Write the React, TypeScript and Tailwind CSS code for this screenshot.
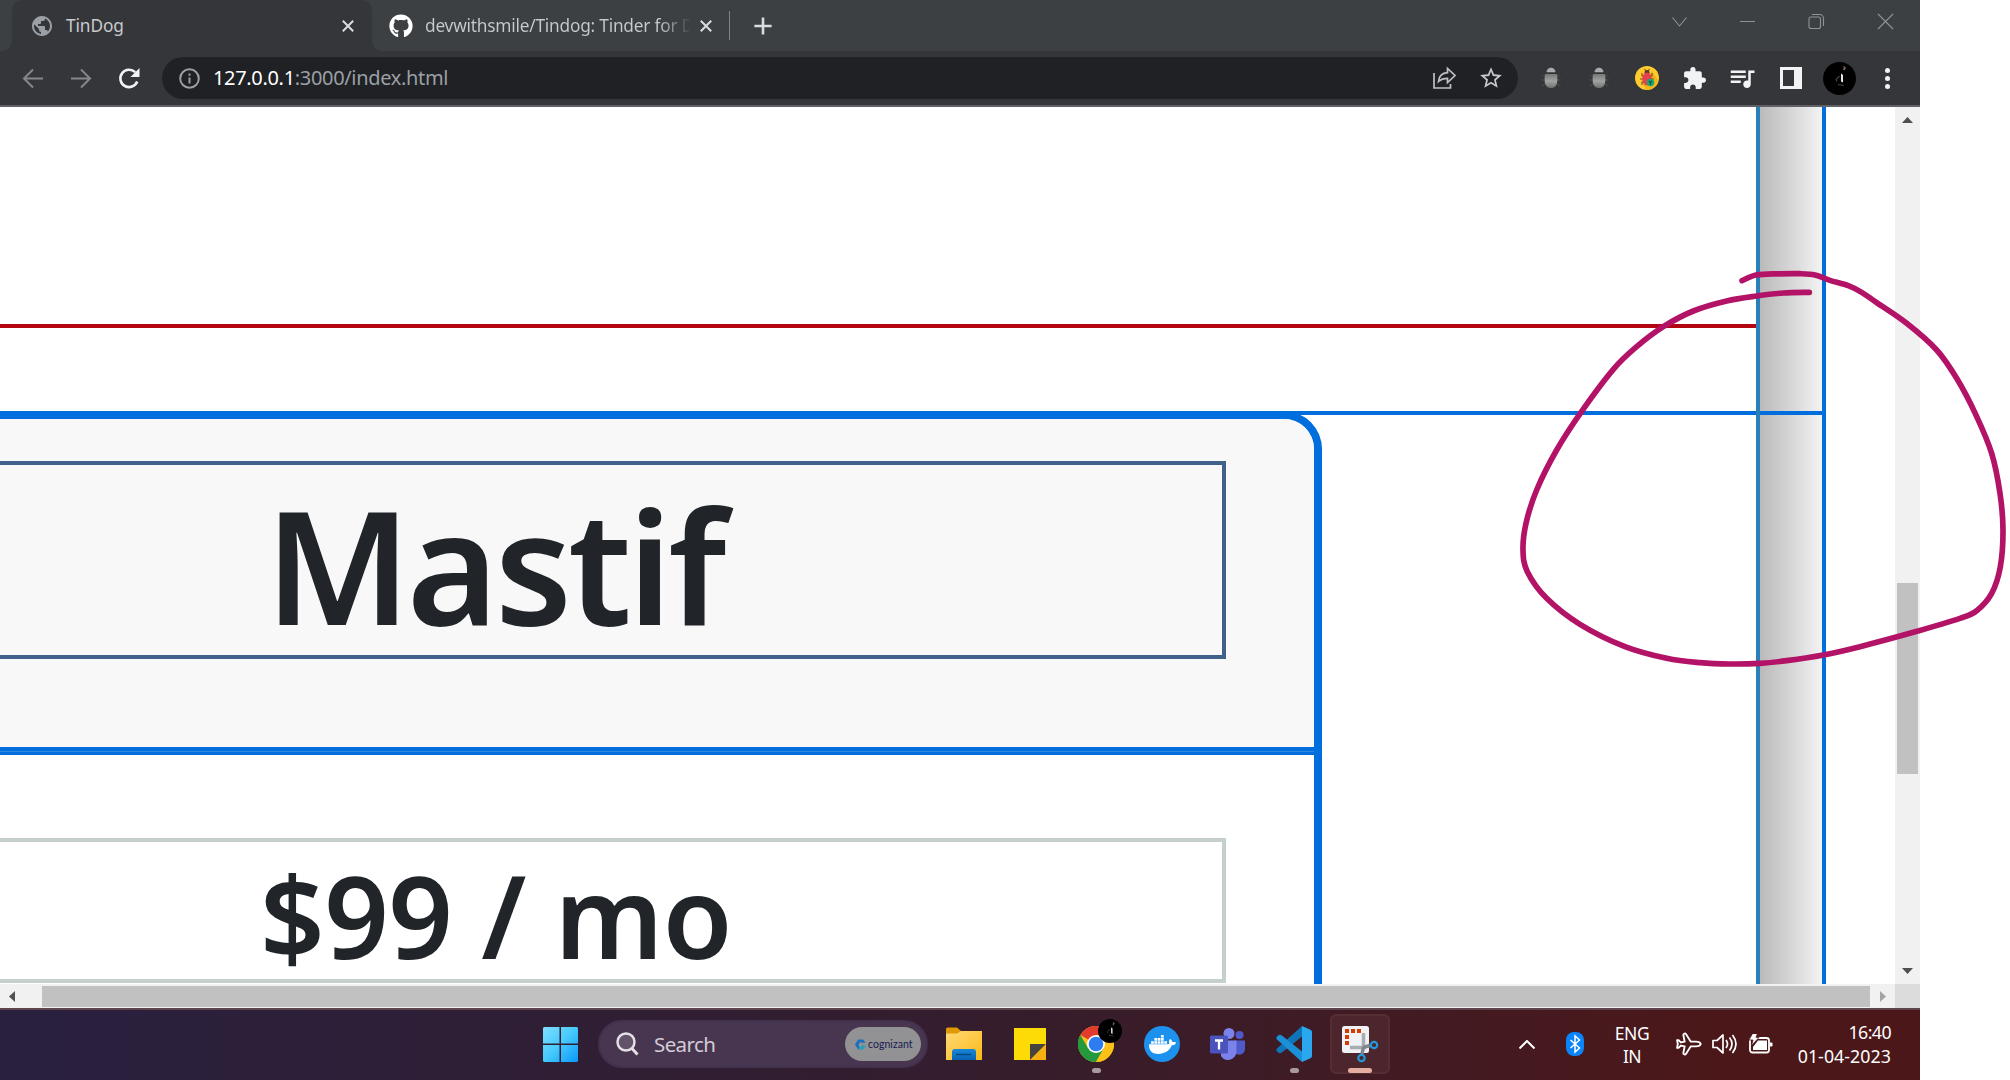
import React from 'react';
import { Plane } from 'lucide-react';
import { FaDocker } from 'react-icons/fa';
import { FaGithub } from 'react-icons/fa6';
import { MdExtension, MdPublic, MdQueueMusic, MdStarBorder } from 'react-icons/md';

const STROKE_POINTS: [number, number][] = [
  [726, 92], [768, 75], [835, 71.5], [900, 71], [945, 75], [990, 91], [1045, 107], [1085, 127], [1130, 158], [1220, 220],
  [1310, 300], [1370, 385], [1427, 493], [1475, 610], [1500, 730], [1509, 840], [1501, 950], [1475, 1030],
  [1430, 1082], [1380, 1105], [1240, 1147], [1080, 1190], [970, 1215], [860, 1232], [780, 1240], [690, 1242],
  [600, 1238], [500, 1225], [375, 1190], [240, 1123], [140, 1045], [82, 965], [69, 900], [78, 820],
  [110, 720], [170, 600], [245, 484], [340, 358], [410, 290], [490, 230], [580, 183], [680, 153], [770, 138],
  [850, 129], [928, 127],
];

/** Smooth cubic path running through every point. */
function smoothPath(pts: [number, number][]): string {
  let d = `M${pts[0][0]} ${pts[0][1]}`;
  for (let i = 0; i < pts.length - 1; i++) {
    const a = pts[Math.max(i - 1, 0)];
    const b = pts[i];
    const c = pts[i + 1];
    const e = pts[Math.min(i + 2, pts.length - 1)];
    d += `C${b[0] + (c[0] - a[0]) / 6} ${b[1] + (c[1] - a[1]) / 6} ${c[0] - (e[0] - b[0]) / 6} ${c[1] - (e[1] - b[1]) / 6} ${c[0]} ${c[1]}`;
  }
  return d;
}

function PenStroke() {
  return (
    <svg className="pointer-events-none absolute left-[1500px] top-[250px] z-20" width="510" height="430" viewBox="0 0 1530 1290" fill="none">
      <path d={smoothPath(STROKE_POINTS)} stroke="#b31366" strokeWidth="17" strokeLinecap="round" strokeLinejoin="round" />
    </svg>
  );
}

function Cross({ className }: { className: string }) {
  return (
    <svg className={className} width="12" height="12" viewBox="0 0 12 12" stroke="currentColor" strokeWidth="2" fill="none">
      <path d="M.8.8l10.4 10.4M11.2.8L.8 11.2" />
    </svg>
  );
}

function TabStrip() {
  return (
    <div className="flex h-[51px] bg-[#3c4043] text-[17.3px] leading-[51px]">
      <div className="w-3 bg-[#35363a]">
        <div className="h-full rounded-br-[10px] bg-[#3c4043]" />
      </div>
      <div className="flex w-[360px] items-center rounded-t-[10px] bg-[#35363a] pl-[18px] pr-[18px] text-[#dadce0]">
        <MdPublic className="size-6 text-[#9aa0a6]" />
        <span className="ml-3 flex-1 tracking-[-0.1px] text-[#c8cacd]">TinDog</span>
        <Cross className="text-[#dadce0]" />
      </div>
      <div className="w-[358px] bg-[#35363a]">
        <div className="flex h-full items-center rounded-bl-[10px] bg-[#3c4043] pl-[17px]">
          <FaGithub className="size-6 text-white" />
          <span className="ml-3 w-[266px] overflow-hidden whitespace-nowrap bg-gradient-to-r from-[#c8cacd] from-88% to-transparent bg-clip-text tracking-[-0.22px] text-transparent">
            devwithsmile/Tindog: Tinder for Dogs
          </span>
          <Cross className="ml-[9px] text-[#dadce0]" />
          <div className="ml-auto h-[29px] w-px bg-[#7f8386]" />
        </div>
      </div>
      <svg className="ml-6 mt-[17px]" width="18" height="18" viewBox="0 0 18 18" stroke="#dadce0" strokeWidth="2.6">
        <path d="M9 .4v17.2M.4 9h17.2" />
      </svg>
      <div className="ml-auto flex pt-[13px]">
        <svg width="248" height="18" fill="none" stroke="#909396" strokeWidth="1.1">
          <path d="M.5 4.5l7 8.5 7-8.5M68 8.5h15M206 1l15 15M221 1l-15 15" />
          <rect x="137" y="4" width="11.5" height="11.5" rx="2" />
          <path d="M140 1.5h7.5a4 4 0 014 4V13" />
        </svg>
      </div>
    </div>
  );
}

function Bug() {
  return (
    <svg width="24" height="24" viewBox="0 0 24 24" fill="none">
      <path d="M3 9l4 2M2 14h5M3 20l4-3M21 9l-4 2M22 14h-5M21 20l-4-3" stroke="#47484c" strokeWidth="1.3" />
      <path d="M7.5 6.5C7.500 0 16.500 0 16.500 6.500z" fill="#aaa" />
      <path d="M6 8h12q2 14-6 14T6 8z" fill="url(#bugBody)" />
      <path d="M6 7.200h12" stroke="#333" strokeWidth="1.400" />
      <defs>
        <linearGradient id="bugBody" x1="0" y1="0" x2="0" y2="1">
          <stop stopColor="#777" />
          <stop offset=".5" stopColor="#a2a2a2" />
          <stop offset="1" stopColor="#707070" />
        </linearGradient>
      </defs>
    </svg>
  );
}

function ColorBug() {
  return (
    <svg width="24" height="24" viewBox="0 0 24 24">
      <circle cx="12" cy="12" r="12" fill="#fdcb2e" />
      <path d="M17 5l6 9a12 12 0 01-11 10l-4-5z" fill="#f3b518" />
      <path d="M7 7v3h3M17 7v3h-3M5 13h14M7 19v-3h3M9.500 3l1.500 2M14.500 3L13 5" stroke="#7a4a30" strokeWidth="1.1" fill="none" />
      <circle cx="12" cy="6.500" r="2.500" fill="#5b3a2e" />
      <ellipse cx="12" cy="13" rx="4.800" ry="6.500" fill="#e2434d" />
      <circle cx="15.500" cy="16.500" r="3.700" fill="#19a974" />
      <path d="M14 15l1.500 1.500L17 15M15.500 16.500v2.500" stroke="#14544a" strokeWidth="1.2" fill="none" />
    </svg>
  );
}

function Avatar({ className }: { className: string }) {
  return (
    <svg className={className} viewBox="0 0 33 33">
      <circle cx="16.500" cy="16.500" r="16.500" fill="#000" />
      <path d="M18 11.500l2 1.500v7.500l-2-1z" fill="#e5e5ee" />
      <path d="M20 4l3 1.500-1.500 3-1.500-1 1-1.500z" fill="#8d6f66" />
      <path d="M16.500 14l-3.500 3.500 1 2M15 22.500l6 1" stroke="#47434a" strokeWidth="1.1" fill="none" />
    </svg>
  );
}

function Toolbar() {
  return (
    <div className="flex h-14 items-start border-b-2 border-[#5f6165] bg-[#35363a] pt-1.5">
      <svg className="ml-[21px] mt-[9px]" width="120" height="24" fill="none">
        <g stroke="#85878a" strokeWidth="2">
          <path d="M22 12.500H3.500M12 3.500l-9 9 9 9" />
          <path d="M50 12.500h18.500M60 3.500l9 9-9 9" />
        </g>
        <path d="M116.200 15.500a8.700 8.700 0 11-2-9.300" stroke="#f1f3f4" strokeWidth="2.600" />
        <path d="M118.500 2v9h-9z" fill="#f1f3f4" />
      </svg>
      <div className="ml-[21px] flex h-[42px] w-[1356px] items-center rounded-full bg-[#202124] pl-[17px] pr-[12px]">
        <svg width="21" height="21" viewBox="0 0 21 21" fill="none" stroke="#9aa0a6" strokeWidth="2">
          <circle cx="10.500" cy="10.500" r="9.300" />
          <path d="M10.500 9.500v6M10.500 5.500v2.200" />
        </svg>
        <span className="ml-[13px] flex-1 text-[20px] tracking-[-0.33px] text-[#9aa0a6]">
          <span className="text-white">127.0.0.1</span>:3000/index.html
        </span>
        <svg className="mr-[19px]" width="25" height="24" viewBox="0 0 25 24" fill="none" stroke="#bdc1c6" strokeWidth="1.7">
          <path d="M2 7v15h16.500v-4" />
          <path d="M6.500 15.500c.5-5.500 4-8.500 9-8.800V2.500l7.500 7-7.500 7v-4.200c-4 0-6.500.8-9 3.200z" />
        </svg>
        <MdStarBorder className="mx-0.5 size-[26px] text-[#c6c9cc]" />
      </div>
      <div className="flex h-[42px] flex-1 items-center pl-[21px] text-[#f1f3f4]">
        <Bug />
        <div className="w-6" />
        <Bug />
        <div className="w-6" />
        <ColorBug />
        <MdExtension className="ml-[23px] size-[25px]" />
        <MdQueueMusic className="ml-[20px] size-[30px]" />
        <div className="ml-[23px] flex h-[22px] w-[22px] border-2 border-[#f1f3f4] bg-[#f1f3f4] p-px pr-[6px]">
          <div className="flex-1 bg-[#35363a]" />
        </div>
        <Avatar className="ml-[21px] size-[33px]" />
        <div className="ml-[29px] flex flex-col gap-[3px]">
          <i className="size-[5px] rounded-full bg-[#f1f3f4]" />
          <i className="size-[5px] rounded-full bg-[#f1f3f4]" />
          <i className="size-[5px] rounded-full bg-[#f1f3f4]" />
        </div>
      </div>
    </div>
  );
}

function PricingCard() {
  return (
    <div className="-mt-1 h-[600px] w-[1322px] overflow-hidden rounded-tr-[38px] border-r-8 border-t-8 border-[#006edc] text-[#212529]">
      <div className="h-[332px] border-b-4 border-[#006edc] bg-[#f8f8f8] pt-[42px]">
        <div className="h-[198px] w-[1226px] border-y-4 border-r-4 border-[#40618a]">
          <h3 className="ml-[265px] text-[157px] font-semibold leading-[198px] tracking-[-4px]">Mastif</h3>
        </div>
      </div>
      <div className="h-1 border-t border-[#3389e2] bg-[#006edc]" />
      <div className="mt-[83px] h-[145px] w-[1226px] border-y-4 border-r-4 border-[#c5d0cb]">
        <h2 className="ml-[260px] whitespace-nowrap text-[113px] font-[560] leading-[147px] tracking-[-0.5px]">$99 / mo</h2>
      </div>
    </div>
  );
}

function Page() {
  return (
    <div className="relative h-[877px] w-[1895px] overflow-hidden bg-white">
      <div className="absolute inset-y-0 left-[1760px] w-[62px] bg-gradient-to-r from-[#bababa] to-[#f3f3f3]" />
      <div className="relative h-[221px] w-[1756px] border-b-4 border-[#b30610]" />
      <div className="relative mt-[83px] w-[1822px] border-t-4 border-[#006edc]">
        <PricingCard />
      </div>
      <div className="absolute inset-y-0 left-[1756px] w-[70px] border-l-4 border-r-4 border-l-[#2980b9] border-r-[#006edc]" />
    </div>
  );
}

function VerticalScrollbar() {
  return (
    <div className="flex w-[25px] flex-col items-center bg-[#f1f1f1]">
      <svg className="mt-[10px]" width="11" height="6"><path d="M0 6L5.500 0 11 6z" fill="#505050" /></svg>
      <div className="mt-[460px] h-[191px] w-[21px] bg-[#c1c1c1]" />
      <svg className="mb-[10px] mt-auto" width="11" height="6"><path d="M0 0h11L5.500 6z" fill="#505050" /></svg>
    </div>
  );
}

function HorizontalScrollbar() {
  return (
    <div className="flex h-6 items-center bg-[#f1f1f1]">
      <svg className="ml-[9px]" width="6" height="11"><path d="M6 0v11L0 5.500z" fill="#505050" /></svg>
      <div className="ml-[27px] h-[21px] w-[1828px] bg-[#c1c1c1]" />
      <svg className="ml-[10px]" width="6" height="11"><path d="M0 0v11l6-5.500z" fill="#a3a3a3" /></svg>
      <div className="ml-auto h-full w-[25px] bg-[#dcdcdc]" />
    </div>
  );
}

function WindowsLogo() {
  return (
    <svg width="35" height="35" viewBox="0 0 35 35">
      <defs>
        <linearGradient id="win" x1="0" y1="0" x2="1" y2="1">
          <stop stopColor="#7fe0ff" />
          <stop offset=".5" stopColor="#45c9fc" />
          <stop offset="1" stopColor="#0a98fb" />
        </linearGradient>
      </defs>
      <path d="M1 0h15.500v16.500H0V1zM18 0h16l1 1v15.500H18zM0 18h16.500v17H1l-1-1zM18 18h17v16l-1 1H18z" fill="url(#win)" />
    </svg>
  );
}

function SearchBox() {
  return (
    <div className="ml-5 flex h-12 w-[330px] items-center rounded-full border-2 border-[#41314c] bg-[#483650] pl-[16px] pr-[5px]">
      <svg width="23" height="24" viewBox="0 0 23 24" fill="none" stroke="#e4e0e6" strokeWidth="2.500">
        <circle cx="10" cy="10" r="8.500" fill="#62536a" />
        <path d="M15.500 16l6 6.500" strokeWidth="3" />
      </svg>
      <span className="ml-[15px] flex-1 pt-px text-[20.500px] tracking-[-0.6px] text-[#d2ccd5]">Search</span>
      <div className="flex h-[34px] w-[76px] items-center rounded-full bg-[#929294] pl-[10px]">
        <svg width="11" height="11" viewBox="0 0 11 11">
          <path d="M3 .5h5l2.500 3-3 .5-2-1-2 2.500L5 9.500 3 10.500 0 5.500z" fill="#1c6fc0" />
          <path d="M3 10.500h5l3-3.500-3-1-3 2z" fill="#25a2b5" />
        </svg>
        <span className="ml-[2px] font-[Lato] text-[10.500px] leading-none tracking-[0.05px] text-[#191a55]">cognizant</span>
      </div>
    </div>
  );
}

function FolderIcon() {
  return (
    <svg width="36" height="34" viewBox="0 0 36 34">
      <defs>
        <linearGradient id="folder" x1="0" y1="0" x2="1" y2="1">
          <stop stopColor="#ffd976" />
          <stop offset="1" stopColor="#fbb917" />
        </linearGradient>
        <linearGradient id="folderBlue" x1="0" y1="0" x2="0" y2="1">
          <stop stopColor="#1a86d8" />
          <stop offset="1" stopColor="#0864b4" />
        </linearGradient>
      </defs>
      <path d="M0 1.500L1.500.5H11l4 3.500v6H0z" fill="#dd9a05" />
      <path d="M0 6.500h11L15 4h21v29H0z" fill="url(#folder)" />
      <path d="M6 33v-8a3 3 0 013-3h18a3 3 0 013 3v8z" fill="url(#folderBlue)" />
      <path d="M10 27.500h15" stroke="#064a86" strokeWidth="1.500" />
    </svg>
  );
}

function StickyIcon() {
  return (
    <svg width="32" height="32" viewBox="0 0 32 32">
      <path d="M0 0h32v16L16 32H0z" fill="#fddb06" />
      <path d="M16 16h16L16 32z" fill="#46443c" />
      <path d="M32 16v16H16z" fill="#f5b012" />
    </svg>
  );
}

function ChromeIcon() {
  return (
    <svg width="36" height="36" viewBox="0 0 36 36">
      <circle cx="18" cy="18" r="18" fill="#fbc116" />
      <path d="M18 18L2.400 9A18 18 0 0133.600 9H18z" fill="#e33b2e" />
      <path d="M2.400 9A18 18 0 0018 36l7.800-13.500L10.200 22.500z" fill="#25993e" />
      <path d="M33.600 9H18v9l7.800 4.500L18 36A18 18 0 0033.600 9z" fill="#fbc116" />
      <circle cx="18" cy="18" r="9" fill="#fff" />
      <circle cx="18" cy="18" r="7.300" fill="#2d7cf0" />
    </svg>
  );
}

function TeamsIcon() {
  return (
    <svg width="36" height="33" viewBox="0 0 36 33">
      <circle cx="29.500" cy="7" r="4" fill="#5059c9" />
      <circle cx="19" cy="5.500" r="5.500" fill="#7b83eb" />
      <path d="M24 12.500h11V21a6 6 0 01-11 3z" fill="#5059c9" />
      <path d="M11 12.500h15.500V23a8.500 9 0 01-15.500 5z" fill="#7b83eb" />
      <rect y="7.500" width="18" height="18" rx="1.500" fill="#4b53bc" />
      <path d="M5 12.500h8M9 12.500v9" stroke="#fff" strokeWidth="2.300" />
    </svg>
  );
}

function VsCodeIcon() {
  return (
    <svg width="36" height="36" viewBox="0 0 36 36">
      <path d="M26 0L1 22.500q-1.300 1.500 0 3l2 1.500q1.200.6 2.500-.2L26 10.500z" fill="#0f74b8" />
      <path d="M26 36L1 13.500q-1.300-1.500 0-3L3 9q1.200-.6 2.500.2L26 25.500z" fill="#1a90d6" />
      <path d="M26 0l8.500 3.800Q36 4.600 36 6v24q0 1.400-1.500 2.200L26 36z" fill="#2ba7f0" />
    </svg>
  );
}

function SnipIcon() {
  return (
    <svg width="37" height="37" viewBox="0 0 37 37" fill="none">
      <rect width="27" height="27" rx="2.500" fill="#f0f2f5" />
      <path d="M3 5h4M9 5h4M15 5h4M3 11h4M3 17h4" stroke="#d83b01" strokeWidth="4" />
      <path d="M21.500 7v16M8 21.500h16" stroke="#a9adb2" strokeWidth="3.500" />
      <path d="M21.500 21l-1.500 7M21 21.500l7-2" stroke="#7f868c" strokeWidth="3.500" />
      <circle cx="32" cy="19" r="3.200" stroke="#2298da" strokeWidth="2.200" />
      <circle cx="19.500" cy="32" r="3.200" stroke="#2298da" strokeWidth="2.200" />
    </svg>
  );
}

function Taskbar() {
  return (
    <div className="h-[72px] border-t-2 border-[#5d444d] bg-gradient-to-r from-[#29203f] from-0% via-[#331d2e] via-48% to-[#4b1719] to-90%">
      <div className="flex h-[68px] items-center pl-[543px] text-white">
        <WindowsLogo />
        <SearchBox />
        <div className="ml-[18px]"><FolderIcon /></div>
        <div className="ml-8"><StickyIcon /></div>
        <div className="relative ml-8">
          <ChromeIcon />
          <Avatar className="absolute -top-[7px] left-5 size-6" />
          <i className="absolute left-[14px] top-[42px] h-[5px] w-[9px] rounded-full bg-[#aa9aa0]" />
        </div>
        <div className="ml-[30px] flex size-9 items-center justify-center rounded-full bg-[#1d91ee]">
          <FaDocker className="size-[27px]" />
        </div>
        <div className="ml-[30px]"><TeamsIcon /></div>
        <div className="relative ml-[30px]">
          <VsCodeIcon />
          <i className="absolute left-[14px] top-[42px] h-[5px] w-[9px] rounded-full bg-[#aa9aa0]" />
        </div>
        <div className="relative ml-[18px] size-[60px] rounded-md border-2 border-[#572d35] bg-[#4d252d] pl-[10px] pt-[10px]">
          <SnipIcon />
          <i className="absolute left-4 top-[52px] h-[5px] w-6 rounded-full bg-[#e5aea3]" />
        </div>
        <svg className="ml-[129px]" width="16" height="9" fill="none" stroke="#fff" strokeWidth="2"><path d="M.5 8.500L8 1l7.500 7.500" /></svg>
        <div className="ml-[31px] flex h-6 w-[18px] justify-center rounded-[8px] bg-[#0a84f8]">
          <svg width="12" height="24" viewBox="0 0 12 24" fill="none" stroke="#fff" strokeWidth="1.500"><path d="M1.500 8l9 8L6 20V4l4.500 4-9 8" /></svg>
        </div>
        <div className="ml-[29px] w-[38px] pt-px text-center text-[17.500px] leading-[23px] tracking-[-0.5px]">
          <div>ENG</div>
          <div>IN</div>
        </div>
        <Plane className="ml-[23px] size-[26px] rotate-45" strokeWidth={1.700} />
        <svg className="ml-[12px]" width="25" height="22" viewBox="0 0 25 22" fill="none" stroke="#fff" strokeWidth="1.700">
          <path d="M1 7.500h4l6-5.500v18l-6-5.500H1z" strokeLinejoin="round" />
          <path d="M14 7q3 4 0 8M17.500 4.500q5 6.500 0 13M20.500 2q7 9 0 18" />
        </svg>
        <svg className="ml-[12px]" width="24" height="20" viewBox="0 0 24 20" fill="none">
          <rect x="1" y="4" width="19" height="14.500" rx="2.500" stroke="#fff" strokeWidth="1.800" />
          <path d="M9 6.500h9V16H4v-3z" fill="#fff" />
          <path d="M21 8.500h1.500q1 0 1 1v2q0 1-1 1H21z" fill="#fff" />
          <path d="M3.500-.5h5L7 3.500h3L2.500 11.500 4 6H0z" fill="#fff" stroke="#49181c" strokeWidth=".8" />
        </svg>
        <div className="ml-auto mr-[29px] text-right text-[17.800px] leading-[24px]">
          <div className="tracking-[-0.6px]">16:40</div>
          <div className="tracking-[0.05px]">01-04-2023</div>
        </div>
      </div>
    </div>
  );
}

export default function App() {
  return (
    <div className="relative h-[1080px] w-[2010px] overflow-hidden bg-white font-['Noto_Sans','Open_Sans',sans-serif]">
      <div className="w-[1920px]">
        <TabStrip />
        <Toolbar />
        <div className="flex h-[877px]">
          <Page />
          <VerticalScrollbar />
        </div>
        <HorizontalScrollbar />
        <Taskbar />
      </div>
      <PenStroke />
    </div>
  );
}
